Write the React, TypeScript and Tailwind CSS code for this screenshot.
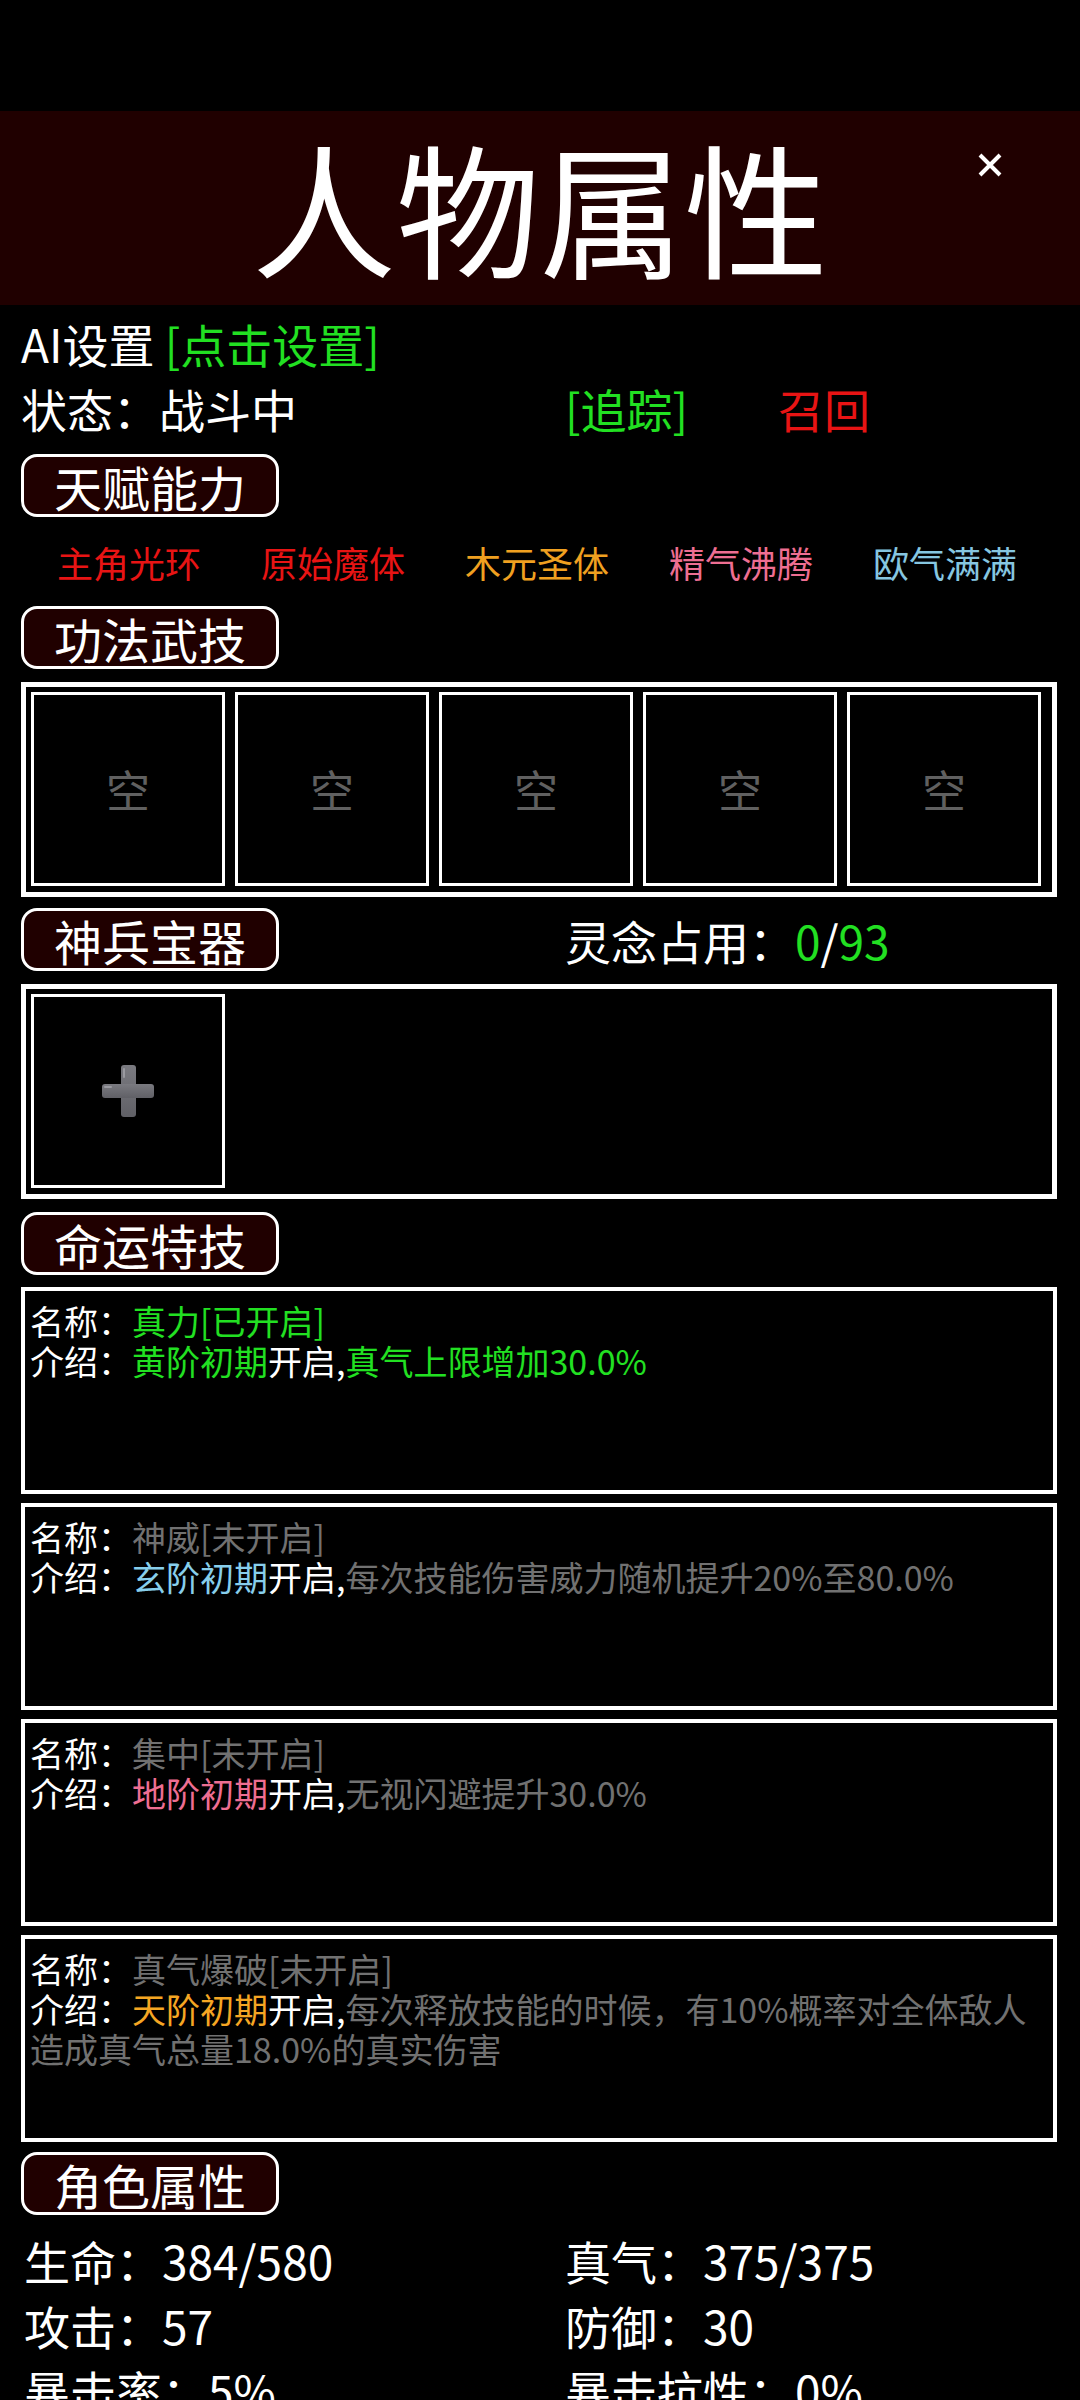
import React from "react";

const talents = [
  { name: "主角光环", color: "text-[#e81414]" },
  { name: "原始魔体", color: "text-[#e81414]" },
  { name: "木元圣体", color: "text-[#f0a020]" },
  { name: "精气沸腾", color: "text-[#ee6e92]" },
  { name: "欧气满满", color: "text-[#86c6e0]" },
];

const fates = [
  {
    name: "真力[已开启]",
    nameColor: "text-[#22e022]",
    tier: "黄阶初期",
    tierColor: "text-[#22e022]",
    desc: "真气上限增加30.0%",
    descColor: "text-[#22e022]",
  },
  {
    name: "神威[未开启]",
    nameColor: "text-[#717171]",
    tier: "玄阶初期",
    tierColor: "text-[#87ceeb]",
    desc: "每次技能伤害威力随机提升20%至80.0%",
    descColor: "text-[#717171]",
  },
  {
    name: "集中[未开启]",
    nameColor: "text-[#717171]",
    tier: "地阶初期",
    tierColor: "text-[#ee6e92]",
    desc: "无视闪避提升30.0%",
    descColor: "text-[#717171]",
  },
  {
    name: "真气爆破[未开启]",
    nameColor: "text-[#717171]",
    tier: "天阶初期",
    tierColor: "text-[#f5a623]",
    desc: "每次释放技能的时候，有10%概率对全体敌人造成真气总量18.0%的真实伤害",
    descColor: "text-[#717171]",
  },
];

const stats = [
  ["生命：384/580", "真气：375/375"],
  ["攻击：57", "防御：30"],
  ["暴击率：5%", "暴击抗性：0%"],
];

function SectionTag({ label }: { label: string }) {
  return (
    <div className="w-[258px] h-[63px] border-[3px] border-white rounded-[16px] bg-[#200000] flex items-center justify-center text-[48px] leading-none text-white">
      {label}
    </div>
  );
}

function PlusIcon() {
  return (
    <svg width="54" height="54" viewBox="0 0 54 54">
      <defs>
        <linearGradient id="pg" x1="0" y1="0" x2="0" y2="1">
          <stop offset="0" stopColor="#7a7a80" />
          <stop offset="1" stopColor="#606066" />
        </linearGradient>
      </defs>
      <rect x="20" y="1" width="15" height="52" rx="3" fill="url(#pg)" />
      <rect x="1" y="20" width="52" height="14" rx="3" fill="url(#pg)" />
      <rect x="22" y="4" width="2" height="10" rx="1" fill="#9a9aa0" />
      <rect x="3" y="22" width="8" height="2" rx="1" fill="#9a9aa0" />
    </svg>
  );
}

export default function App() {
  return (
    <div className="w-[1080px] min-h-[2400px] bg-black text-white overflow-hidden font-['Noto_Sans_CJK_SC','Noto_Sans',sans-serif]">
      <div className="h-[111px]" />

      <header className="relative h-[194px] pb-[6px] bg-[#200000] flex items-center justify-center">
        <span className="text-[144px] leading-none text-white">人物属性</span>
        <svg
          className="absolute left-[977px] top-[42px]"
          width="26"
          height="24"
          viewBox="0 0 26 24"
        >
          <path d="M3 2 L23 22 M23 2 L3 22" stroke="#fff" strokeWidth="4" />
        </svg>
      </header>

      <main className="px-[21px]">
        <div className="mt-[6px] text-[46px] leading-[65px]">
          AI设置 <span className="text-[#22e022]">[点击设置]</span>
        </div>
        <div className="flex text-[46px] leading-[65px]">
          <span className="w-[544px]">状态：战斗中</span>
          <span className="w-[213px] text-[#22e022]">[追踪]</span>
          <span className="text-[#e81414]">召回</span>
        </div>

        <div className="mt-[13px]">
          <SectionTag label="天赋能力" />
        </div>
        <div className="h-[89px] ml-[6px] w-[1020px] grid grid-cols-5 items-center text-[36px] leading-none">
          {talents.map((t) => (
            <span key={t.name} className={`text-center ${t.color}`}>
              {t.name}
            </span>
          ))}
        </div>

        <SectionTag label="功法武技" />
        <div className="mt-[13px] w-[1036px] h-[215px] border-[5px] border-white pl-[5px] pt-[5px] flex gap-[10px]">
          {[0, 1, 2, 3, 4].map((i) => (
            <div
              key={i}
              className="w-[194px] h-[194px] border-[3px] border-white flex items-center justify-center text-[44px] text-[#606060]"
            >
              空
            </div>
          ))}
        </div>

        <div className="mt-[11px] flex items-center">
          <div className="w-[544px]">
            <SectionTag label="神兵宝器" />
          </div>
          <span className="text-[46px] leading-none">
            灵念占用：<span className="text-[#22e022]">0</span>/
            <span className="text-[#22e022]">93</span>
          </span>
        </div>
        <div className="mt-[13px] w-[1036px] h-[215px] border-[5px] border-white pl-[5px] pt-[5px]">
          <div className="w-[194px] h-[194px] border-[3px] border-white flex items-center justify-center">
            <PlusIcon />
          </div>
        </div>

        <div className="mt-[13px]">
          <SectionTag label="命运特技" />
        </div>
        <div className="mt-[12px] flex flex-col gap-[9px]">
          {fates.map((f) => (
            <div
              key={f.name}
              className="w-[1036px] h-[207px] border-[4px] border-white pt-[10px] pl-[5px] pr-[6px] text-[34px] leading-[40px]"
            >
              <div>
                名称：<span className={f.nameColor}>{f.name}</span>
              </div>
              <div>
                介绍：<span className={f.tierColor}>{f.tier}</span>开启,
                <span className={f.descColor}>{f.desc}</span>
              </div>
            </div>
          ))}
        </div>

        <div className="mt-[10px]">
          <SectionTag label="角色属性" />
        </div>
        <div className="mt-[13px] flex flex-col text-[46px] leading-[65px]">
          {stats.map(([a, b]) => (
            <div key={a} className="flex">
              <span className="w-[544px] pl-[3px]">{a}</span>
              <span>{b}</span>
            </div>
          ))}
        </div>
      </main>
    </div>
  );
}
